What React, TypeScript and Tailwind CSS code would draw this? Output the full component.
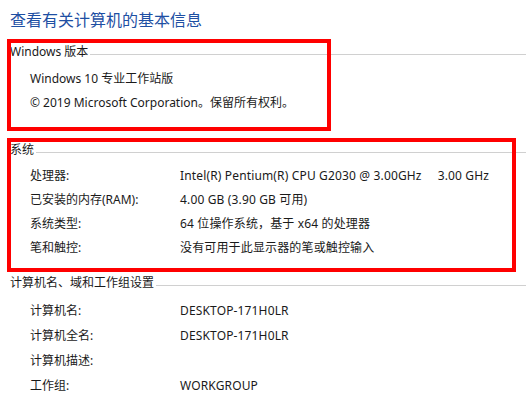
const font = {
  fontFamily: '"Segoe UI", "Noto Sans", "Noto Sans CJK SC", sans-serif',
};

function SectionHeader({ title }: { title: string }) {
  return (
    <div className="flex h-[24px] items-center pl-[10px]">
      <span className="whitespace-nowrap">{title}</span>
      <div className="ml-[2px] mt-[5px] h-px flex-1 bg-[#d0d0d0]" />
    </div>
  );
}

function Row({ label, value }: { label: string; value?: React.ReactNode }) {
  return (
    <div className="flex h-[24px] items-center">
      <span className="w-[180px] shrink-0 whitespace-nowrap pl-[30px]">{label}</span>
      <span className="whitespace-nowrap tracking-[0.15px]">{value}</span>
    </div>
  );
}

export default function App() {
  return (
    <div
      className="relative h-[398px] w-[526px] overflow-hidden bg-white text-[12px] text-[#1a1a1a]"
      style={font}
    >
      <h1 className="flex h-[40px] items-center pl-[10px] text-[16px] font-normal text-[#1e4fa3]">
        查看有关计算机的基本信息
      </h1>

      <SectionHeader title="Windows 版本" />
      <div className="pt-[3px]">
        <Row label="Windows 10 专业工作站版" />
        <div className="flex h-[24px] items-center pl-[30px] whitespace-nowrap">
          © 2019 Microsoft Corporation。保留所有权利。
        </div>
      </div>

      <div className="mt-[23px]">
        <SectionHeader title="系统" />
      </div>
      <div className="pt-[2px]">
        <Row
          label="处理器:"
          value={
            <>
              Intel(R) Pentium(R) CPU G2030 @ 3.00GHz
              <span className="ml-[16px]">3.00 GHz</span>
            </>
          }
        />
        <Row label="已安装的内存(RAM):" value="4.00 GB (3.90 GB 可用)" />
        <Row label="系统类型:" value="64 位操作系统，基于 x64 的处理器" />
        <Row label="笔和触控:" value="没有可用于此显示器的笔或触控输入" />
      </div>

      <div className="mt-[11px]">
        <SectionHeader title="计算机名、域和工作组设置" />
      </div>
      <div className="flex flex-col gap-px pt-[4px]">
        <Row label="计算机名:" value="DESKTOP-171H0LR" />
        <Row label="计算机全名:" value="DESKTOP-171H0LR" />
        <Row label="计算机描述:" />
        <Row label="工作组:" value="WORKGROUP" />
      </div>

      {/* red annotation boxes drawn over the content */}
      <div className="pointer-events-none absolute left-[7px] top-[39px] h-[92px] w-[324px] border-[4px] border-[#ff0000]" />
      <div className="pointer-events-none absolute left-[7px] top-[138px] h-[134px] w-[509px] border-[4px] border-[#ff0000]" />
    </div>
  );
}
